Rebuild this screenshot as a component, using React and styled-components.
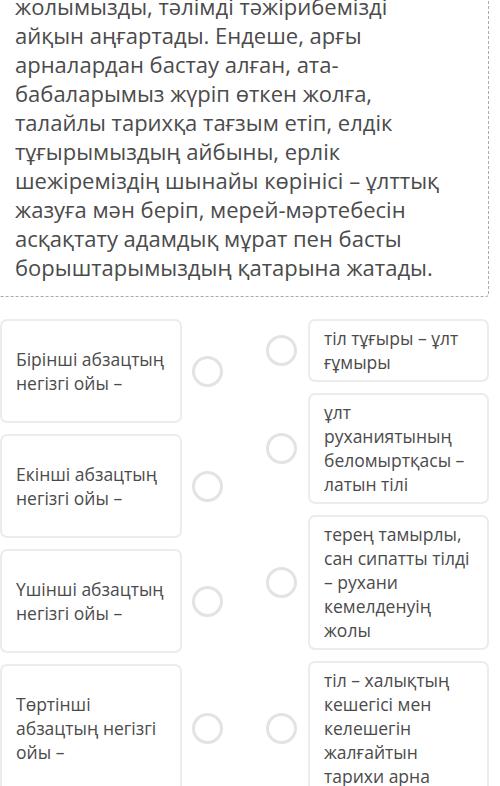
import React from 'react';
import styled, { createGlobalStyle } from 'styled-components';

const GlobalStyle = createGlobalStyle`
  html, body {
    margin: 0;
    padding: 0;
    background: #fff;
    overflow: hidden;
  }
  body {
    font-family: "Open Sans", "Noto Sans", sans-serif;
    color: #4b4b4b;
  }
`;

const Page = styled.div`
  width: 489px;
  height: 786px;
  overflow: hidden;
`;

const Passage = styled.div`
  margin-top: -20px;
  padding: 12px 40px 14px 15px;
  border-right: 1px dashed #aaa;
  border-bottom: 1px dashed #aaa;
  border-bottom-right-radius: 3px;
  font-size: 22px;
  line-height: 29px;
`;

const Matching = styled.div`
  display: grid;
  grid-template-columns: 1fr 1fr;
  column-gap: 43px;
  margin-top: 22px;
  align-items: start;
`;

const Column = styled.div`
  display: flex;
  flex-direction: column;
  gap: 11px;
`;

const Row = styled.div`
  display: flex;
  align-items: center;
  gap: ${p => (p.$side === 'left' ? '10px' : '11px')};
`;

const Card = styled.div`
  flex: 1;
  min-width: 0;
  box-sizing: border-box;
  border: 2px solid #ececec;
  border-radius: 7px;
  background: #fff;
  font-size: 17.5px;
  line-height: 24px;
  padding: ${p => (p.$side === 'left' ? '26px 12px 26px 14px' : '5px 13px 6px 14px')};
`;

const Radio = styled.span`
  flex: 0 0 auto;
  width: 31px;
  height: 31px;
  box-sizing: border-box;
  border: 3px solid #e3e3e3;
  border-radius: 50%;
  background: #fff;
`;

const questions = [
  'Бірінші абзацтың негізгі ойы –',
  'Екінші абзацтың негізгі ойы –',
  'Үшінші абзацтың негізгі ойы –',
  'Төртінші абзацтың негізгі ойы –',
];

const answers = [
  'тіл тұғыры – ұлт ғұмыры',
  'ұлт руханиятының беломыртқасы – латын тілі',
  'терең тамырлы, сан сипатты тілді – рухани кемелденуің жолы',
  'тіл – халықтың кешегісі мен келешегін жалғайтын тарихи арна',
];

const App = () => (
  <Page>
    <GlobalStyle />
    <Passage>
      жолымызды, тәлімді тәжірибемізді айқын аңғартады. Ендеше, арғы
      арналардан бастау алған, ата-бабаларымыз жүріп өткен жолға, талайлы
      тарихқа тағзым етіп, елдік тұғырымыздың айбыны, ерлік шежіреміздің
      шынайы көрінісі – ұлттық жазуға мән беріп, мерей-мәртебесін асқақтату
      адамдық мұрат пен басты борыштарымыздың қатарына жатады.
    </Passage>
    <Matching>
      <Column>
        {questions.map(q => (
          <Row key={q} $side="left">
            <Card $side="left">{q}</Card>
            <Radio />
          </Row>
        ))}
      </Column>
      <Column>
        {answers.map(a => (
          <Row key={a} $side="right">
            <Radio />
            <Card $side="right">{a}</Card>
          </Row>
        ))}
      </Column>
    </Matching>
  </Page>
);

export default App;
